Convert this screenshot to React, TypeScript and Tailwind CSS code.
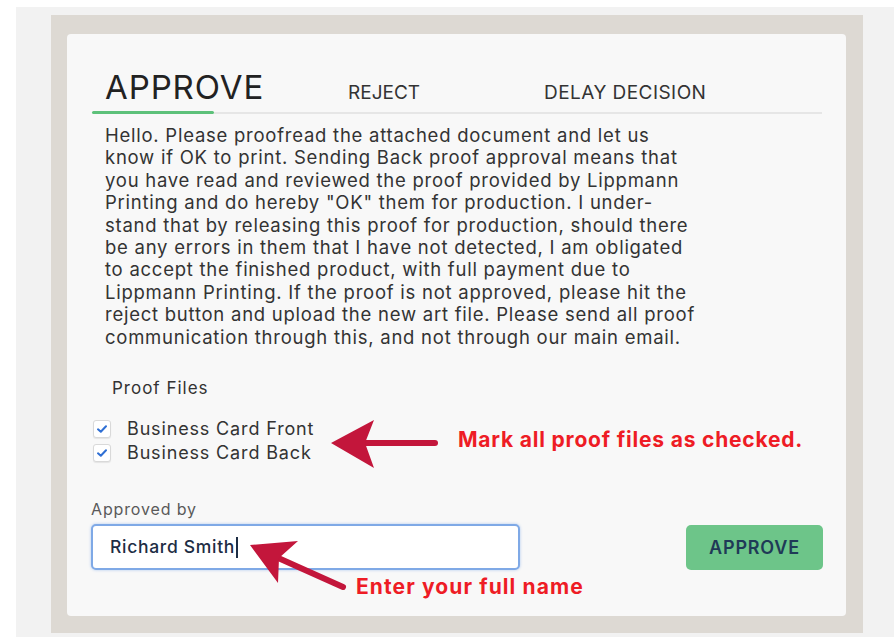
import React from 'react';

const proofText = [
  'Hello. Please proofread the attached document and let us',
  'know if OK to print. Sending Back proof approval means that',
  'you have read and reviewed the proof provided by Lippmann',
  'Printing and do hereby "OK" them for production. I under-',
  'stand that by releasing this proof for production, should there',
  'be any errors in them that I have not detected, I am obligated',
  'to accept the finished product, with full payment due to',
  'Lippmann Printing. If the proof is not approved, please hit the',
  'reject button and upload the new art file. Please send all proof',
  'communication through this, and not through our main email.',
];

const proofFiles = ['Business Card Front', 'Business Card Back'];

function CheckBox() {
  return (
    <span className="flex h-[18px] w-[18px] items-center justify-center rounded-[3px] border border-[#d9d9d9] bg-white shadow-[0_1px_1px_rgba(0,0,0,0.08)]">
      <svg width="10" height="8" viewBox="0 0 10 8" fill="none">
        <path d="M1 4.3 L3.8 6.8 L9 1.2" stroke="#2f6fd4" strokeWidth="2" strokeLinecap="round" strokeLinejoin="round" />
      </svg>
    </span>
  );
}

export default function App() {
  return (
    <div className="h-[637px] w-[894px] bg-white pl-[16px] pt-[7px] font-['Inter',sans-serif] text-[#333]">
      <div className="h-[630px] bg-[#f2f2f2] pl-[35px] pt-[8px]">
        <div className="h-[618px] w-[812px] bg-[#ddd9d3] pl-[16px] pt-[19px]">
          <div className="relative h-[582px] w-[779px] rounded-[4px] bg-[#f8f8f8]">
            {/* Tabs */}
            <div className="flex items-baseline pl-[38px] pt-[37px] leading-none">
              <span className="w-[243px] text-[33px] tracking-[0.9px] text-[#222]">APPROVE</span>
              <span className="w-[196px] text-[19px] text-[#333]">REJECT</span>
              <span className="text-[19px] tracking-[0.45px] text-[#333]">DELAY DECISION</span>
            </div>
            <div className="ml-[25px] mr-[24px] mt-[7px] flex items-end">
              <div className="h-[3px] w-[122px] rounded-full bg-[#5dc17a]" />
              <div className="h-[2px] flex-1 bg-[#e6e6e6]" />
            </div>

            {/* Proof notice */}
            <div className="mt-[10px] pl-[38px] text-[18.5px] leading-[22.4px] tracking-[0.75px] text-[#333]">
              {proofText.map((line, i) => (
                <div key={i} className="whitespace-nowrap">{line}</div>
              ))}
            </div>

            <div className="mt-[28px] pl-[45px] text-[17px] leading-[24px] tracking-[1px] text-[#333]">Proof Files</div>

            <div className="mt-[17px] pl-[26px]">
              {proofFiles.map(name => (
                <div key={name} className="flex h-[24px] items-center">
                  <CheckBox />
                  <span className="ml-[16px] text-[18px] leading-[22px] tracking-[0.85px] text-[#333]">{name}</span>
                </div>
              ))}
            </div>

            <div className="mt-[34px] pl-[24px] text-[16px] leading-[20px] tracking-[0.85px] text-[#5a5a5a]">Approved by</div>

            <div className="mt-[5px] flex items-center justify-between pl-[24px] pr-[23px]">
              <div className="flex h-[46px] w-[429px] items-center rounded-[5px] border-2 border-[#7fa9e6] bg-white pl-[17px] shadow-[0_0_3px_rgba(80,140,230,0.45)]">
                <span className="text-[17.5px] font-medium tracking-[0.7px] text-[#1d2d44]">Richard Smith</span>
                <span className="ml-[1px] h-[21px] w-[2px] bg-[#1d2d44]" />
              </div>
              <button className="h-[45px] w-[137px] rounded-[5px] bg-[#6dc589] text-[18px] font-semibold tracking-[0.8px] text-[#1f3a57]">
                APPROVE
              </button>
            </div>

            {/* Callouts */}
            <svg className="absolute left-[258px] top-[381px]" width="115" height="57" viewBox="0 0 115 57">
              <line x1="40" y1="28" x2="110" y2="28" stroke="#c3163b" strokeWidth="6" strokeLinecap="round" />
              <polygon points="6,28 49,5 40,28 49,53" fill="#c3163b" />
            </svg>
            <div className="absolute left-[391px] top-[394px] whitespace-nowrap text-[21px] font-bold leading-[24px] tracking-[0.8px] text-[#ee1c25]">
              Mark all proof files as checked.
            </div>

            <svg className="absolute left-[173px] top-[501px]" width="110" height="60" viewBox="0 0 110 60">
              <line x1="36" y1="22" x2="103" y2="52" stroke="#c3163b" strokeWidth="6" strokeLinecap="round" />
              <polygon points="10,10 58,6 39,23 38,48" fill="#c3163b" />
            </svg>
            <div className="absolute left-[289px] top-[541px] whitespace-nowrap text-[21px] font-bold leading-[24px] tracking-[1.1px] text-[#ee1c25]">
              Enter your full name
            </div>
          </div>
        </div>
      </div>
    </div>
  );
}
